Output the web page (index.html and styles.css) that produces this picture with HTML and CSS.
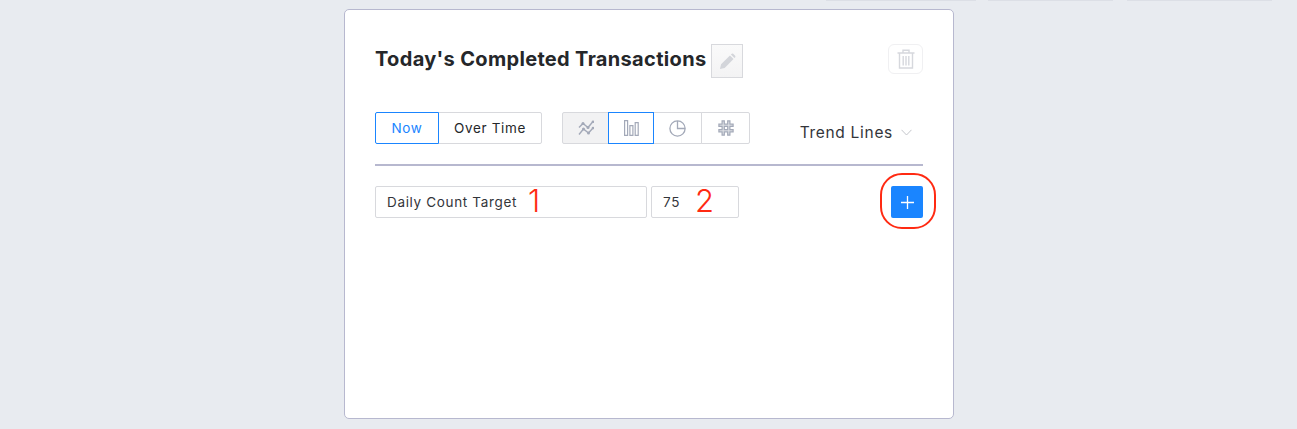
FILE: index.html
```html
<!DOCTYPE html>
<html lang="en">
<head>
  <meta charset="UTF-8" />
  <title>Today's Completed Transactions</title>
  <link rel="stylesheet" href="styles.css">
</head>
<body>
  <div class="top-tabs">
    <span class="top-tab tab-a"></span>
    <span class="top-tab tab-b"></span>
    <span class="top-tab tab-c"></span>
  </div>

  <div class="card">
    <div class="card-head">
      <h1>Today's Completed Transactions</h1>
      <button class="edit-btn" type="button" aria-label="Edit title">
        <svg width="17" height="17" viewBox="0 0 18 18"><path d="M1 17 L2.2 12 L11.6 2.6 L15.4 6.4 L6 15.8 Z M12.6 1.6 L13.6 0.8 Q14.3 0.3 15 0.9 L17.1 3 Q17.7 3.7 17.2 4.4 L16.4 5.4 Z" fill="#d3d5da"/></svg>
      </button>
      <button class="trash-btn" type="button" aria-label="Delete">
        <svg width="18" height="20" viewBox="0 0 18 20" fill="none" stroke="#d6d8dd" stroke-width="1.4"><path d="M0.5 4 H17.5 M6 4 V1.2 H12 V4 M2.5 4 V19 H15.5 V4 M6.2 7 V16.5 M9 7 V16.5 M11.8 7 V16.5"/></svg>
      </button>
    </div>

    <div class="controls">
      <div class="btn-group">
        <button class="seg seg-text active" type="button">Now</button>
        <button class="seg seg-text" type="button">Over Time</button>
      </div>
      <div class="btn-group icons">
        <button class="seg seg-icon shaded" type="button" aria-label="Line chart">
          <svg width="16" height="16" viewBox="0 0 16 16" fill="none" stroke="#a3a9b8" stroke-width="1.4"><path d="M1 7.5 L5 3.5 L10 7.5 L15 1.5 M1 14.5 L5.5 9 L10.5 13 L15 8"/><g fill="#a3a9b8" stroke="none"><circle cx="5" cy="3.5" r="1.5"/><circle cx="10" cy="7.5" r="1.5"/><circle cx="15" cy="1.8" r="1.3"/><circle cx="5.5" cy="9" r="1.5"/><circle cx="10.5" cy="13" r="1.5"/><circle cx="15" cy="8" r="1.3"/></g></svg>
        </button>
        <button class="seg seg-icon active" type="button" aria-label="Bar chart">
          <svg width="15" height="16" viewBox="0 0 15 16" fill="none" stroke="#a3a9b8" stroke-width="1.2"><path d="M0.6 0.6 H3.6 V15.4 H0.6 Z M5.9 5.6 H8.9 V15.4 H5.9 Z M11.2 2.6 H14.2 V15.4 H11.2 Z"/></svg>
        </button>
        <button class="seg seg-icon" type="button" aria-label="Pie chart">
          <svg width="17" height="17" viewBox="0 0 17 17" fill="none" stroke="#a3a9b8" stroke-width="1.3"><circle cx="8.5" cy="8.5" r="7.6"/><path d="M8.5 0.9 V8.5 H16.1"/></svg>
        </button>
        <button class="seg seg-icon" type="button" aria-label="Number">
          <svg width="16" height="16" viewBox="0 0 16 16" fill="none" stroke-linecap="square"><path d="M5.2 2 V14 M10.8 2 V14 M2 5.2 H14 M2 10.8 H14" stroke="#a3a9b8" stroke-width="3.4"/><path d="M5.2 2 V14 M10.8 2 V14 M2 5.2 H14 M2 10.8 H14" stroke="#e4e6ea" stroke-width="0.9"/></svg>
        </button>
      </div>
      <div class="trend">
        <span>Trend Lines</span>
        <svg width="11" height="7" viewBox="0 0 11 7" fill="none" stroke="#c4c6cc" stroke-width="1"><path d="M0.5 0.8 L5.5 6 L10.5 0.8"/></svg>
      </div>
    </div>

    <hr class="divider">

    <div class="target-row">
      <div class="field field-name">Daily Count Target</div>
      <div class="field field-value">75</div>
      <button class="add-btn" type="button" aria-label="Add">
        <svg width="13" height="13" viewBox="0 0 13 13" stroke="#fff" stroke-width="1.3"><path d="M6.5 0 V13 M0 6.5 H13"/></svg>
      </button>

      <span class="mark mark-one">1</span>
      <span class="mark mark-two">2</span>
      <span class="ring"></span>
    </div>
  </div>
</body>
</html>
```

FILE: styles.css
```css
:root {
  --page-bg: #e8ebf0;
  --card-border: #b7b8cf;
  --line: #d8d9dd;
  --blue: #1a85ff;
  --text: #25272a;
  --red: #ff2a12;
}

* {
  box-sizing: border-box;
  margin: 0;
  padding: 0;
}

body {
  font-family: 'Inter', 'Liberation Sans', sans-serif;
  background: var(--page-bg);
  color: var(--text);
  height: 429px;
  overflow: hidden;
}

/* bottom edge of the tabs scrolled off above the card */
.top-tabs {
  display: flex;
  height: 1px;
  padding-left: 826px;
}

.top-tab {
  height: 1px;
  background: #dcdfe6;
}

.tab-a { width: 150px; margin-right: 12px; }
.tab-b { width: 125px; margin-right: 14px; }
.tab-c { width: 145px; }

.card {
  width: 610px;
  height: 410px;
  margin: 8px 0 0 344px;
  padding: 34px 30px 0;
  background: #fff;
  border: 1px solid var(--card-border);
  border-radius: 5px;
}

.card-head {
  display: flex;
  align-items: flex-start;
  height: 34px;
}

h1 {
  font-size: 20px;
  font-weight: 700;
  line-height: 30px;
  letter-spacing: 0.33px;
  white-space: nowrap;
}

.edit-btn {
  display: flex;
  align-items: center;
  justify-content: center;
  width: 32px;
  height: 34px;
  margin-left: 5px;
  background: linear-gradient(#fafafa, #f3f3f4);
  border: 1px solid var(--line);
}

.trash-btn {
  display: flex;
  align-items: center;
  justify-content: center;
  width: 35px;
  height: 30px;
  margin-left: auto;
  background: #fff;
  border: 1px solid #f0f0f2;
  border-radius: 6px;
}

.controls {
  display: flex;
  align-items: center;
  height: 32px;
  margin-top: 34px;
}

.btn-group {
  display: flex;
}

.btn-group.icons {
  margin-left: 20px;
}

.seg {
  display: flex;
  align-items: center;
  justify-content: center;
  height: 32px;
  background: #fff;
  border: 1px solid var(--line);
  margin-left: -1px;
  font-family: inherit;
  color: var(--text);
}

.seg:first-child {
  margin-left: 0;
  border-radius: 2px 0 0 2px;
}

.seg:last-child {
  border-radius: 0 2px 2px 0;
}

.seg-text {
  font-size: 13.5px;
  letter-spacing: 0.65px;
  padding: 0;
}

.seg-text:first-child { width: 64px; }
.seg-text:last-child { width: 104px; }

.seg-icon { width: 47px; }
.seg-icon:nth-child(2) { width: 46px; }
.seg-icon:nth-child(3) { width: 49px; }
.seg-icon:nth-child(4) { width: 49px; }

.seg.shaded {
  background: #f2f2f3;
}

.seg.active {
  position: relative;
  border-color: var(--blue);
  color: var(--blue);
}

.trend {
  display: flex;
  align-items: center;
  gap: 8px;
  margin-left: auto;
  margin-right: 11px;
  padding-top: 8px;
  font-size: 15.5px;
  letter-spacing: 0.7px;
  color: #33353a;
}

.divider {
  height: 2px;
  margin-top: 20px;
  border: 0;
  background: var(--card-border);
}

.target-row {
  position: relative;
  display: flex;
  margin-top: 20px;
}

.field {
  height: 32px;
  padding-left: 11px;
  border: 1px solid var(--line);
  border-radius: 2px;
  font-size: 13.5px;
  letter-spacing: 0.66px;
  line-height: 30px;
  color: #33353a;
}

.field-name { width: 272px; }

.field-value {
  width: 88px;
  margin-left: 4px;
}

.add-btn {
  display: flex;
  align-items: center;
  justify-content: center;
  width: 32px;
  height: 32px;
  margin-left: auto;
  background: var(--blue);
  border: 0;
  border-radius: 2px;
}

/* red annotations drawn over the screenshot */
.mark {
  position: absolute;
  top: -1px;
  font-size: 31px;
  font-weight: 300;
  line-height: 32px;
  color: var(--red);
}

.mark-one { left: 153px; }
.mark-two { left: 320px; }

.ring {
  position: absolute;
  top: -13px;
  right: -13px;
  width: 56px;
  height: 56px;
  border: 2px solid var(--red);
  border-radius: 22px;
}
```
